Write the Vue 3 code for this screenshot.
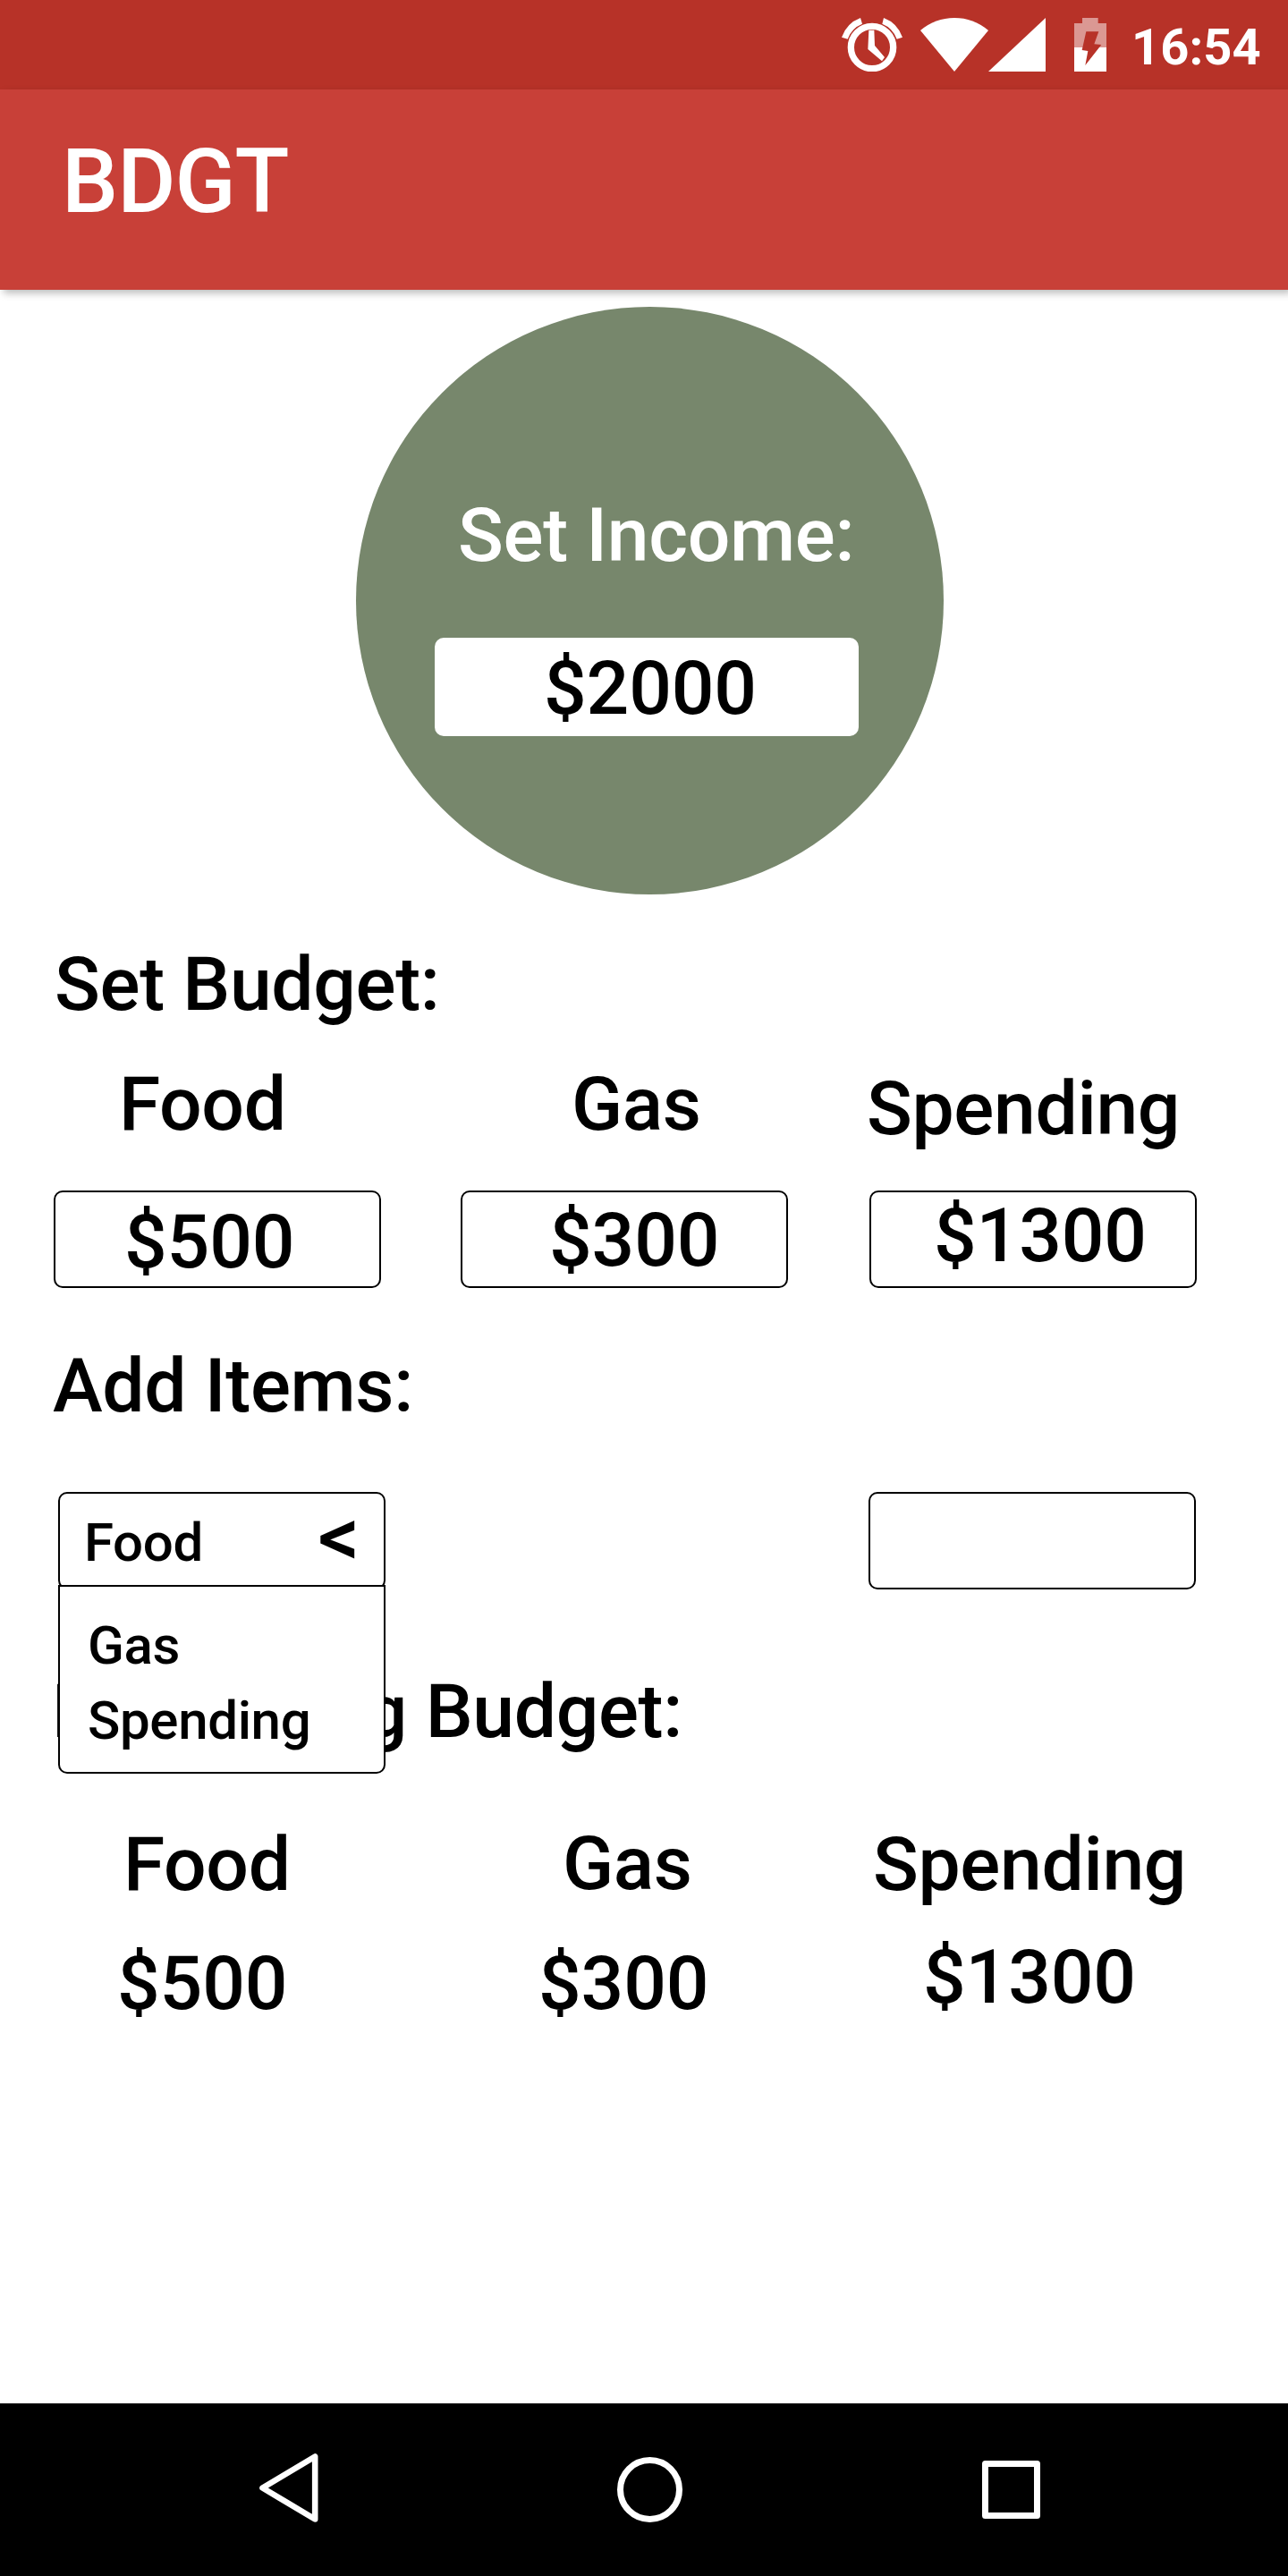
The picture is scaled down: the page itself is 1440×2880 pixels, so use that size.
<script setup>
const budget = [
  { key: 'food', name: 'Food', amount: '$500' },
  { key: 'gas', name: 'Gas', amount: '$300' },
  { key: 'spending', name: 'Spending', amount: '$1300' },
]
const options = ['Gas', 'Spending']
</script>

<template>
  <div class="screen">
    <div class="status">
      <svg class="alarm" viewBox="62 60 204 180" width="68" height="60">
        <circle cx="164" cy="159" r="71" fill="none" stroke="#fff" stroke-width="22" />
        <path d="M125 60A107 107 0 0 0 62 125L82 131A86 86 0 0 1 131 80Z" fill="#fff" />
        <path d="M203 60A107 107 0 0 1 266 125L247 131A86 86 0 0 0 198 80Z" fill="#fff" />
        <path d="M153 101H171L173 153L206 192L197 205L150 165Z" fill="#fff" />
      </svg>
      <svg class="wifi" viewBox="326 60 228 180" width="76" height="60">
        <path d="M326 102Q376 60 440 60T554 102L440 240Z" fill="#fff" />
      </svg>
      <svg class="signal" viewBox="555 60 192 180" width="64" height="60">
        <path d="M555 240L747 60V240Z" fill="#fff" />
      </svg>
      <svg class="battery" viewBox="843 60 108 180" width="36" height="60">
        <path d="M870 60H923V78H951V159H843V78H870Z" fill="#db9893" />
        <path d="M843 159H951V240H843Z" fill="#fff" />
        <path d="M883 106H925L910 148L934 150L880 219L889 171L869 168Z" fill="#b73228" />
      </svg>
      <span class="time">16:54</span>
    </div>

    <header class="appbar"><h1>BDGT</h1></header>

    <main>
      <section class="income">
        <p class="income-label">Set Income:</p>
        <div class="income-box">$2000</div>
      </section>

      <h2 class="set-title">Set Budget:</h2>
      <div class="row set-row">
        <div v-for="b in budget" :key="b.key" class="col" :class="b.key">
          <div class="name">{{ b.name }}</div>
          <div class="box">{{ b.amount }}</div>
        </div>
      </div>

      <h2 class="add-title">Add Items:</h2>
      <div class="add-row">
        <div class="select">
          <span>Food</span>
          <span class="caret">&lt;</span>
          <div class="menu">
            <div v-for="o in options" :key="o" class="option">{{ o }}</div>
          </div>
        </div>
        <div class="box"></div>
      </div>

      <h2 class="left-title">Remaining Budget:</h2>
      <div class="row left-row">
        <div v-for="b in budget" :key="b.key" class="col" :class="b.key">
          <div class="name">{{ b.name }}</div>
          <div class="amount">{{ b.amount }}</div>
        </div>
      </div>
    </main>

    <nav class="nav">
      <svg class="back" viewBox="0 0 66 77" width="66" height="77">
        <path d="M3.5 38.5L62.2 3.5V73.5Z" fill="none" stroke="#fff" stroke-width="6.6" stroke-linejoin="round" />
      </svg>
      <svg class="home" viewBox="0 0 73 73" width="73" height="73">
        <circle cx="36.5" cy="36.5" r="33" fill="none" stroke="#fff" stroke-width="7" />
      </svg>
      <svg class="recent" viewBox="0 0 65 65" width="65" height="65">
        <rect x="3.5" y="3.5" width="58" height="58" fill="none" stroke="#fff" stroke-width="7" stroke-linejoin="round" />
      </svg>
    </nav>
  </div>
</template>

<style>
body {
  margin: 0;
  background: #fff;
}
</style>

<style scoped>
.screen {
  width: 1440px;
  height: 2880px;
  display: flex;
  flex-direction: column;
  background: #fff;
  color: #000;
  font: 500 84px/100px Roboto, sans-serif;
  letter-spacing: -0.35px;
  overflow: hidden;
}
svg {
  display: block;
  flex: none;
}
h1, h2, p {
  margin: 0;
  font: inherit;
}
.status {
  height: 100px;
  flex: none;
  display: flex;
  align-items: flex-start;
  box-sizing: border-box;
  padding: 20px 0 0 941px;
  background: #b73228;
  color: #fff;
}
.wifi { margin-left: 20px; }
.battery { margin-left: 32px; }
.time {
  margin-left: 28px;
  font-size: 56px;
  font-weight: 700;
  line-height: 66px;
  letter-spacing: 0.1px;
}
.appbar {
  position: relative;
  height: 224px;
  flex: none;
  box-sizing: border-box;
  padding: 43px 0 0 69px;
  background: #c84038;
  color: #fff;
  box-shadow: 4px 4px 8px rgba(0, 0, 0, 0.26);
}
h1 {
  font-size: 100px;
  line-height: 120px;
  letter-spacing: -1px;
}
main {
  flex: 1;
  display: flex;
  flex-direction: column;
}
.income {
  width: 657px;
  height: 657px;
  box-sizing: border-box;
  margin: 19px 0 0 398px;
  padding: 206px 0 0 88px;
  border-radius: 50%;
  background: #77876c;
}
.income-label {
  margin-left: 26px;
  color: #fff;
}
.income-box {
  width: 474px;
  height: 110px;
  box-sizing: border-box;
  margin-top: 64px;
  padding: 7px 0 0 122px;
  border-radius: 10px;
  background: #fff;
}
.income-box, .box, .amount { letter-spacing: -0.15px; }
.set-title { margin: 51px 0 0 61px; }
.row {
  display: grid;
  grid-template-columns: 455px 457px 366px;
  padding-left: 60px;
}
.name { box-sizing: border-box; }
.box {
  width: 366px;
  height: 109px;
  box-sizing: border-box;
  border: 2px solid #000;
  border-radius: 10px;
}
.set-row .name { height: 180px; padding-top: 34px; }
.set-row .food .name { padding-left: 73px; }
.set-row .gas .name { padding-left: 124px; }
.set-row .spending .name { padding-top: 39px; margin-left: -3px; }
.set-row .food .box { padding: 6px 0 0 77px; }
.set-row .gas .box { padding: 4px 0 0 97px; }
.set-row .spending .box { padding: 0 0 0 70px; line-height: 98px; }
.add-title { margin: 60px 0 0 59px; }
.add-row {
  display: flex;
  justify-content: space-between;
  margin: 68px 103px 0 65px;
}
.select {
  position: relative;
  display: flex;
  justify-content: space-between;
  width: 366px;
  height: 109px;
  box-sizing: border-box;
  padding: 19px 27px 0 27px;
  border: 2px solid #000;
  border-radius: 10px;
  font-size: 60px;
  line-height: 72px;
}
.caret {
  font-size: 92px;
  line-height: 60px;
}
.menu {
  position: absolute;
  left: -2px;
  top: 102px;
  width: 366px;
  height: 211px;
  box-sizing: border-box;
  padding: 24px 0 0 31px;
  border: 2px solid #000;
  border-radius: 0 0 10px 10px;
  background: #fff;
  line-height: 84px;
}
.left-title { margin: 87px 0 0 58px; }
.left-row { margin-top: 71px; }
.left-row .food .name { padding-left: 78px; }
.left-row .food .amount { margin: 33px 0 0 71px; }
.left-row .gas .name { margin-top: -1px; padding-left: 114px; }
.left-row .gas .amount { margin: 34px 0 0 87px; }
.left-row .spending .name { padding-left: 4px; }
.left-row .spending .amount { margin: 26px 0 0 60px; }
.nav {
  display: flex;
  align-items: flex-start;
  height: 193px;
  flex: none;
  background: #000;
}
.back { margin: 56px 0 0 290px; }
.home { margin: 60px 0 0 334px; }
.recent { margin: 64px 0 0 335px; }
</style>
